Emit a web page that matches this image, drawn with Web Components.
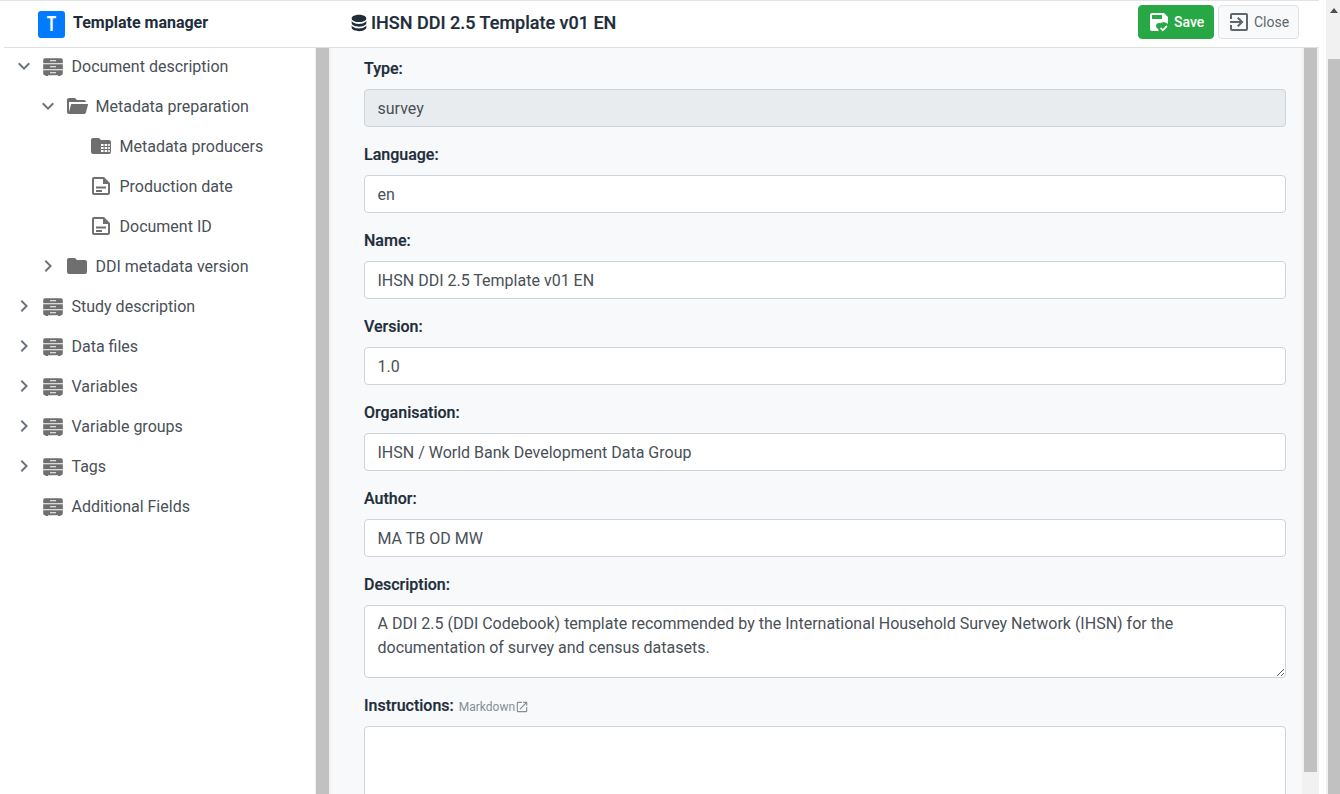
<!DOCTYPE html>
<html lang="en">
<head>
<meta charset="utf-8">
<title>Template manager</title>
<style>
  html, body { margin: 0; height: 100%; overflow: hidden; background: #fff; }
  body { font-family: Roboto, "Liberation Sans", sans-serif; font-size: 16px; }
</style>
</head>
<body>
<tm-app>
  <tm-header slot="header" title="Template manager" doc="IHSN DDI 2.5 Template v01 EN"></tm-header>
  <tm-tree slot="tree">
    <tm-node level="0" icon="cabinet" toggle="open">Document description</tm-node>
    <tm-node level="1" icon="folder-open" toggle="open">Metadata preparation</tm-node>
    <tm-node level="2" icon="folder-table">Metadata producers</tm-node>
    <tm-node level="2" icon="doc">Production date</tm-node>
    <tm-node level="2" icon="doc">Document ID</tm-node>
    <tm-node level="1" icon="folder" toggle="closed">DDI metadata version</tm-node>
    <tm-node level="0" icon="cabinet" toggle="closed">Study description</tm-node>
    <tm-node level="0" icon="cabinet" toggle="closed">Data files</tm-node>
    <tm-node level="0" icon="cabinet" toggle="closed">Variables</tm-node>
    <tm-node level="0" icon="cabinet" toggle="closed">Variable groups</tm-node>
    <tm-node level="0" icon="cabinet" toggle="closed">Tags</tm-node>
    <tm-node level="0" icon="cabinet">Additional Fields</tm-node>
  </tm-tree>
  <tm-form slot="form">
    <tm-field label="Type:" disabled>survey</tm-field>
    <tm-field label="Language:">en</tm-field>
    <tm-field label="Name:">IHSN DDI 2.5 Template v01 EN</tm-field>
    <tm-field label="Version:">1.0</tm-field>
    <tm-field label="Organisation:">IHSN / World Bank Development Data Group</tm-field>
    <tm-field label="Author:">MA TB OD MW</tm-field>
    <tm-field label="Description:" multiline="73">A DDI 2.5 (DDI Codebook) template recommended by the International Household Survey Network (IHSN) for the documentation of survey and census datasets.</tm-field>
    <tm-field label="Instructions:" multiline="200" hint="Markdown"></tm-field>
  </tm-form>
</tm-app>

<script>
(function() {
    'use strict';

    const ICONS = {
        chevronDown: '<path d="M7.41,8.58L12,13.17L16.59,8.58L18,10L12,16L6,10L7.41,8.58Z"/>',
        chevronRight: '<path d="M8.59,16.58L13.17,12L8.59,7.41L10,6L16,12L10,18L8.59,16.58Z"/>',
        cabinet: '<path transform="translate(0 .7)" fill-rule="evenodd" d="M4.5 3.5H19.500A2 2 0 0 1 21.800 5.500V8.500H2.200V5.500A2 2 0 0 1 4.500 3.500ZM9 5.500V6.500H15V5.500ZM2.200 9.500H21.800V14.500H2.200ZM9 11.500V12.500H15V11.500ZM2.200 15.500H21.800V18.500A2 2 0 0 1 19.500 20.500V21.300H17V20.500H7V21.300H4.500V20.500A2 2 0 0 1 2.200 18.500ZM9 17.500V18.500H15V17.500Z"/>',
        'folder-open': '<path d="M19,20H4C2.89,20 2,19.1 2,18V6C2,4.89 2.89,4 4,4H10L12,6H19A2,2 0 0,1 21,8H21L4,8V18L6.14,10H23.21L20.93,18.5C20.7,19.37 19.92,20 19,20Z"/>',
        folder: '<path d="M10,4H4C2.89,4 2,4.89 2,6V18A2,2 0 0,0 4,20H20A2,2 0 0,0 22,18V8C22,6.89 21.1,6 20,6H12L10,4Z"/>',
        'folder-table': '<path fill-rule="evenodd" d="M10,4H4C2.89,4 2,4.89 2,6V18A2,2 0 0,0 4,20H20A2,2 0 0,0 22,18V8C22,6.89 21.1,6 20,6H12L10,4ZM12 10H14.600V12H12ZM15.600 10H18.200V12H15.600ZM19.200 10H20.800V12H19.200ZM12 13H14.600V15H12ZM15.600 13H18.200V15H15.600ZM19.200 13H20.800V15H19.200ZM12 16H14.600V18H12ZM15.600 16H18.200V18H15.600ZM19.200 16H20.800V18H19.200Z"/>',
        doc: '<path fill-rule="evenodd" d="M5 3H15L21 9V19A2 2 0 0 1 19 21H5A2 2 0 0 1 3 19V5A2 2 0 0 1 5 3ZM5 5V19H19V10H14V5ZM7 12.500V14.500H17V12.500ZM7 16V18H13V16Z"/>',
        database: '<path d="M12,3C7.58,3 4,4.79 4,7C4,9.21 7.58,11 12,11C16.42,11 20,9.21 20,7C20,4.79 16.42,3 12,3M4,9V12C4,14.21 7.58,16 12,16C16.42,16 20,14.21 20,12V9C20,11.21 16.42,13 12,13C7.58,13 4,11.21 4,9M4,14V17C4,19.21 7.58,21 12,21C16.42,21 20,19.21 20,17V14C20,16.21 16.42,18 12,18C7.58,18 4,16.21 4,14Z"/>',
        save: '<path d="M17 3H5C3.89 3 3 3.9 3 5V19C3 20.1 3.89 21 5 21H11.81C11.42 20.34 11.17 19.6 11.07 18.84C9.5 18.31 8.66 16.6 9.2 15.03C9.61 13.85 10.73 13.03 12 13C12.44 13 12.88 13.11 13.28 13.3C15.57 11.67 18.75 12.19 21 14V7L17 3M15 9H5V5H15V9M15.750 21.500L13 18.500L14.160 17.340L15.750 18.930L19.340 15.340L20.500 16.750L15.750 21.500Z"/>',
        exit: '<path d="M19,3H5C3.89,3 3,3.89 3,5V9H5V5H19V19H5V15H3V19A2,2 0 0,0 5,21H19A2,2 0 0,0 21,19V5C21,3.89 20.1,3 19,3M10.08,15.58L11.5,17L16.5,12L11.5,7L10.08,8.41L12.67,11H3V13H12.67L10.08,15.58Z"/>',
        external: '<path d="M14,3V5H17.59L7.76,14.83L9.17,16.24L19,6.41V10H21V3M19,19H5V5H12V3H5C3.89,3 3,3.9 3,5V19A2,2 0 0,0 5,21H19A2,2 0 0,0 21,19V12H19V19Z"/>'
    };

    function icon(name, size) {
        return `<svg width="${size}" height="${size}" viewBox="0 0 24 24" fill="currentColor" aria-hidden="true">${ICONS[name] || ''}</svg>`;
    }

    /**
     * Base class: renders once into an open shadow root.
     */
    class ShadowElement extends HTMLElement {
        constructor() {
            super();
            this.attachShadow({ mode: 'open' });
        }

        connectedCallback() {
            this.shadowRoot.innerHTML = this.render();
        }
    }

    // Page shell: header over tree + form, each with its scrollbar
    class TmApp extends ShadowElement {
        render() {
            return `
                <style>
                    :host { display: flex; height: 794px; overflow: hidden; color: #212d3a; }
                    .window { width: 1319px; flex: none; display: flex; flex-direction: column; border-top: 1px solid #e4e4e4; box-sizing: border-box; }
                    .body { flex: 1; display: flex; min-height: 0; }
                    .tree { width: 315px; flex: none; overflow: hidden; }
                    .form { flex: 1; min-width: 0; overflow: hidden; background: #f8f9fa; }
                    .gap { width: 7px; flex: none; }
                </style>
                <div class="window">
                    <slot name="header"></slot>
                    <div class="body">
                        <div class="tree"><slot name="tree"></slot></div>
                        <tm-scrollbar thumb-end="746" left="1" right="2"></tm-scrollbar>
                        <div class="form"><slot name="form"></slot></div>
                        <tm-scrollbar thumb-end="724" left="2" right="2"></tm-scrollbar>
                    </div>
                </div>
                <div class="gap"></div>
                <tm-scrollbar page left="2" right="0"></tm-scrollbar>
            `;
        }
    }

    // Static scrollbar drawn in flow; thumb-end = thumb length from the top of the track
    class TmScrollbar extends ShadowElement {
        render() {
            const page = this.hasAttribute('page');
            const end = this.getAttribute('thumb-end');
            const left = Number(this.getAttribute('left'));
            const right = Number(this.getAttribute('right'));
            return `
                <style>
                    :host { display: flex; flex-direction: column; flex: none; background: #f1f1f1;
                            padding-left: ${left}px; padding-right: ${right}px; }
                    .arrow { height: 59px; display: flex; justify-content: center; padding-top: 8px; box-sizing: border-box; }
                    .arrow i { width: 0; height: 0; border: 4px solid transparent; border-top: 0; border-bottom: 5px solid #505050; }
                    .thumb { width: ${page ? 12 : 13}px; background: #c1c1c1; flex: ${end ? 'none' : 1}; ${end ? `height: ${end}px;` : ''} }
                </style>
                ${page ? '<div class="arrow"><i></i></div>' : ''}
                <div class="thumb"></div>
            `;
        }
    }

    // Top bar with app name, template name and the Save / Close actions
    class TmHeader extends ShadowElement {
        render() {
            return `
                <style>
                    :host { display: flex; align-items: center; height: 47px; box-sizing: border-box; margin-left: 4px;
                            border-bottom: 1px solid #e0e0e0; padding-left: 34px; flex: none; }
                    .logo { width: 27px; height: 27px; border-radius: 3px; background: #007bff; color: #fff;
                            display: flex; align-items: center; justify-content: center; font-weight: 700; font-size: 21px; flex: none; }
                    .logo span { display: block; transform: scaleX(.72); }
                    .app { margin-left: 8px; width: 275px; flex: none; font-size: 16px; font-weight: 700; white-space: nowrap; margin-top: -3px; }
                    .doc { display: flex; align-items: center; font-size: 18px; font-weight: 500; white-space: nowrap; flex: 1; margin-top: -3px; -webkit-text-stroke: 0.2px currentColor; }
                    .doc svg { margin: 0 1px 0 0; flex: none; }
                    .actions { display: flex; gap: 4px; margin-right: 20px; margin-top: -4px; }
                    button { font: inherit; font-size: 14px; height: 34px; box-sizing: border-box; display: flex; align-items: center;
                             border-radius: 4px; padding: 0; cursor: pointer; }
                    .save { width: 76px; background: #28a745; border: 1px solid #28a745; color: #fff; font-weight: 500; padding-left: 8px; gap: 3px; }
                    .close { width: 81px; background: #f8f9fa; border: 1px solid #dee2e6; color: #5f666c; padding-left: 8px; gap: 3px; }
                </style>
                <div class="logo"><span>T</span></div>
                <div class="app">${this.getAttribute('title')}</div>
                <div class="doc">${icon('database', 22)}<span>${this.getAttribute('doc')}</span></div>
                <div class="actions">
                    <button class="save">${icon('save', 24)}<span>Save</span></button>
                    <button class="close">${icon('exit', 24)}<span>Close</span></button>
                </div>
            `;
        }
    }

    class TmTree extends ShadowElement {
        render() {
            return `
                <style>:host { display: flex; flex-direction: column; gap: 4px; }</style>
                <slot></slot>
            `;
        }
    }

    // One row of the template tree; level sets the indent, toggle the chevron
    class TmNode extends ShadowElement {
        render() {
            const level = Number(this.getAttribute('level') || 0);
            const toggle = this.getAttribute('toggle');
            const chevron = toggle === 'open' ? 'chevronDown' : 'chevronRight';
            return `
                <style>
                    :host { display: flex; align-items: center; height: 36px; padding-left: ${12 + 24 * level}px; color: #495057; white-space: nowrap; }
                    .toggle { width: 24px; height: 24px; flex: none; color: #6c757d; margin-right: 5px; }
                    .icon { width: 24px; height: 24px; flex: none; color: #6f6f6f; margin-right: 6.5px; }
                    svg { display: block; }
                </style>
                <span class="toggle">${toggle ? icon(chevron, 24) : ''}</span>
                <span class="icon">${icon(this.getAttribute('icon'), 24)}</span>
                <slot></slot>
            `;
        }
    }

    class TmForm extends ShadowElement {
        render() {
            return `
                <style>:host { display: block; padding: 9px 16px 0 33px; }</style>
                <slot></slot>
            `;
        }
    }

    // Bootstrap-like form group: label above a control
    class TmField extends ShadowElement {
        render() {
            const multiline = this.getAttribute('multiline');
            const hint = this.getAttribute('hint');
            return `
                <style>
                    :host { display: block; margin-bottom: 16px; }
                    label { display: block; height: 24px; line-height: 24px; margin-bottom: 8px; font-size: 16px; font-weight: 500; color: #212d3a; -webkit-text-stroke: 0.2px currentColor; }
                    .hint { font-size: 12px; font-weight: 400; color: #868e96; margin-left: 1px; -webkit-text-stroke: 0; }
                    .hint svg { vertical-align: -3px; margin-left: 0; }
                    .control { box-sizing: border-box; height: 38px; padding: 7px 12px 5px 12.5px; line-height: 24px; font-size: 16px; color: #495057;
                               background: #fff; border: 1px solid #ced4da; border-radius: 4px; white-space: nowrap; }
                    .control.disabled { background: #e9ecef; }
                    .control.multi { white-space: normal; height: ${multiline}px; overflow: auto; resize: vertical; padding-top: 6px; }
                </style>
                <label>${this.getAttribute('label')}${hint ? ` <span class="hint">${hint}${icon('external', 14)}</span>` : ''}</label>
                <div class="control${this.hasAttribute('disabled') ? ' disabled' : ''}${multiline ? ' multi' : ''}"><slot></slot></div>
            `;
        }
    }

    customElements.define('tm-app', TmApp);
    customElements.define('tm-scrollbar', TmScrollbar);
    customElements.define('tm-header', TmHeader);
    customElements.define('tm-tree', TmTree);
    customElements.define('tm-node', TmNode);
    customElements.define('tm-form', TmForm);
    customElements.define('tm-field', TmField);
})();
</script>
</body>
</html>
